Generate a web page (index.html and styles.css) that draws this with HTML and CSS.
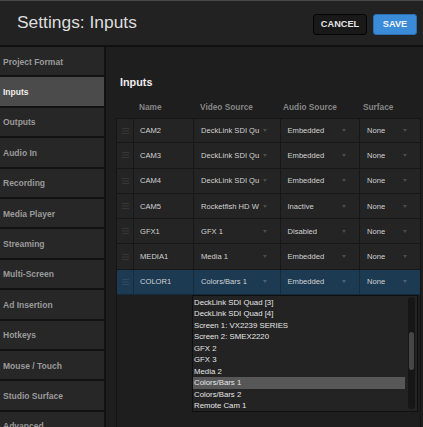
FILE: index.html
```html
<!DOCTYPE html>
<html>
<head>
  <title>Settings: Inputs</title>
  <link rel="stylesheet" href="styles.css">
</head>
<body>
  <div class="header">
    <h1 class="title">Settings: Inputs</h1>
    <div class="actions">
      <button class="btn btn-cancel">CANCEL</button>
      <button class="btn btn-save">SAVE</button>
    </div>
  </div>

  <div class="layout">
    <ul class="sidebar">
      <li class="nav-item">Project Format</li>
      <li class="nav-item active">Inputs</li>
      <li class="nav-item">Outputs</li>
      <li class="nav-item">Audio In</li>
      <li class="nav-item">Recording</li>
      <li class="nav-item">Media Player</li>
      <li class="nav-item">Streaming</li>
      <li class="nav-item">Multi-Screen</li>
      <li class="nav-item">Ad Insertion</li>
      <li class="nav-item">Hotkeys</li>
      <li class="nav-item">Mouse / Touch</li>
      <li class="nav-item">Studio Surface</li>
      <li class="nav-item">Advanced</li>
    </ul>

    <div class="main">
      <h2 class="section-title">Inputs</h2>

      <div class="col-heads">
        <div></div>
        <div class="ch-name">Name</div>
        <div class="ch-video">Video Source</div>
        <div class="ch-audio">Audio Source</div>
        <div class="ch-surface">Surface</div>
      </div>

      <div class="panel">
        <div class="row">
          <div class="cell handle"><svg width="7" height="6" viewBox="0 0 7 6"><path d="M0 .5h7M0 3h7M0 5.5h7" stroke="#363636" stroke-width="1"/></svg></div>
          <div class="cell name">CAM2</div>
          <div class="cell select video"><span>DeckLink SDI Qu</span><i class="caret"></i></div>
          <div class="cell select audio"><span>Embedded</span><i class="caret"></i></div>
          <div class="cell select surface"><span>None</span><i class="caret"></i></div>
        </div>
        <div class="row">
          <div class="cell handle"><svg width="7" height="6" viewBox="0 0 7 6"><path d="M0 .5h7M0 3h7M0 5.5h7" stroke="#363636" stroke-width="1"/></svg></div>
          <div class="cell name">CAM3</div>
          <div class="cell select video"><span>DeckLink SDI Qu</span><i class="caret"></i></div>
          <div class="cell select audio"><span>Embedded</span><i class="caret"></i></div>
          <div class="cell select surface"><span>None</span><i class="caret"></i></div>
        </div>
        <div class="row">
          <div class="cell handle"><svg width="7" height="6" viewBox="0 0 7 6"><path d="M0 .5h7M0 3h7M0 5.5h7" stroke="#363636" stroke-width="1"/></svg></div>
          <div class="cell name">CAM4</div>
          <div class="cell select video"><span>DeckLink SDI Qu</span><i class="caret"></i></div>
          <div class="cell select audio"><span>Embedded</span><i class="caret"></i></div>
          <div class="cell select surface"><span>None</span><i class="caret"></i></div>
        </div>
        <div class="row">
          <div class="cell handle"><svg width="7" height="6" viewBox="0 0 7 6"><path d="M0 .5h7M0 3h7M0 5.5h7" stroke="#363636" stroke-width="1"/></svg></div>
          <div class="cell name">CAM5</div>
          <div class="cell select video"><span>Rocketfish HD W</span><i class="caret"></i></div>
          <div class="cell select audio"><span>Inactive</span><i class="caret"></i></div>
          <div class="cell select surface"><span>None</span><i class="caret"></i></div>
        </div>
        <div class="row">
          <div class="cell handle"><svg width="7" height="6" viewBox="0 0 7 6"><path d="M0 .5h7M0 3h7M0 5.5h7" stroke="#363636" stroke-width="1"/></svg></div>
          <div class="cell name">GFX1</div>
          <div class="cell select video"><span>GFX 1</span><i class="caret"></i></div>
          <div class="cell select audio"><span>Disabled</span><i class="caret"></i></div>
          <div class="cell select surface"><span>None</span><i class="caret"></i></div>
        </div>
        <div class="row">
          <div class="cell handle"><svg width="7" height="6" viewBox="0 0 7 6"><path d="M0 .5h7M0 3h7M0 5.5h7" stroke="#363636" stroke-width="1"/></svg></div>
          <div class="cell name">MEDIA1</div>
          <div class="cell select video"><span>Media 1</span><i class="caret"></i></div>
          <div class="cell select audio"><span>Embedded</span><i class="caret"></i></div>
          <div class="cell select surface"><span>None</span><i class="caret"></i></div>
        </div>
        <div class="row selected">
          <div class="cell handle"><svg width="7" height="6" viewBox="0 0 7 6"><path d="M0 .5h7M0 3h7M0 5.5h7" stroke="#2f4a60" stroke-width="1"/></svg></div>
          <div class="cell name">COLOR1</div>
          <div class="cell select video"><span>Colors/Bars 1</span><i class="caret"></i></div>
          <div class="cell select audio"><span>Embedded</span><i class="caret"></i></div>
          <div class="cell select surface"><span>None</span><i class="caret"></i></div>
        </div>

        <!-- open video source menu for COLOR1 -->
        <div class="dropdown">
          <ul class="options">
            <li>DeckLink SDI Quad [3]</li>
            <li>DeckLink SDI Quad [4]</li>
            <li>Screen 1: VX2239 SERIES</li>
            <li>Screen 2: SMEX2220</li>
            <li>GFX 2</li>
            <li>GFX 3</li>
            <li>Media 2</li>
            <li class="current">Colors/Bars 1</li>
            <li>Colors/Bars 2</li>
            <li>Remote Cam 1</li>
          </ul>
          <div class="scroll-track"><div class="scroll-thumb"></div></div>
        </div>
      </div>
    </div>
  </div>
</body>
</html>
```

FILE: styles.css
```css
/* Dark settings dialog */

* {
  box-sizing: border-box;
}

body {
  margin: 0;
  width: 423px;
  height: 427px;
  overflow: hidden;
  background-color: #1e1e1e;
  font-family: "Liberation Sans", Arial, sans-serif;
  color: #ccc;
}

ul {
  list-style: none;
  margin: 0;
  padding: 0;
}

/* top bar */
.header {
  height: 47px;
  display: flex;
  align-items: center;
  justify-content: space-between;
  padding: 0 6px 0 17px;
  background-color: #222;
  border-top: 1px solid #4a4a4a;
  border-bottom: 2px solid #111;
}

.title {
  margin: 0 0 2px 0;
  font-size: 17.4px;
  font-weight: normal;
  color: #ddd;
}

.actions {
  display: flex;
  gap: 6px;
  margin-top: 2px;
}

.btn {
  height: 21px;
  border-radius: 3px;
  font-family: inherit;
  font-size: 9.2px;
  font-weight: bold;
  color: #e4e4e4;
  padding: 0;
  cursor: pointer;
}

.btn-cancel {
  width: 54px;
  background-color: #191919;
  border: 1px solid #050505;
}

.btn-save {
  width: 44px;
  background-color: #3a8bd8;
  border: 1px solid #2c6fb0;
  color: #f2f6fb;
}

.layout {
  display: flex;
  height: 380px;
}

/* left menu */
.sidebar {
  width: 106px;
  flex-shrink: 0;
  border-right: 2px solid #121212;
  background-color: #121212;
}

.nav-item {
  height: 30.4px;
  display: flex;
  align-items: center;
  padding: 1px 0 0 3px;
  background-color: #272727;
  border-bottom: 2px solid #121212;
  font-size: 8.5px;
  font-weight: bold;
  color: #9a9a9a;
}

.nav-item.active {
  background-color: #4b4b4b;
  color: #eee;
}

/* content */
.main {
  flex: 1;
  display: flex;
  flex-direction: column;
  padding: 29px 0 0 10px;
}

.section-title {
  margin: 0 0 7px 4px;
  font-size: 10.8px;
  line-height: 13px;
  font-weight: bold;
  color: #eee;
}

.col-heads,
.row {
  display: grid;
  grid-template-columns: 17px 60px 87px 79px 61px;
}

.col-heads {
  height: 22px;
  align-items: center;
  font-size: 8.3px;
  font-weight: bold;
  color: #858585;
}

.ch-name { padding-left: 6px; }
.ch-video { padding-left: 7px; }
.ch-audio { padding-left: 3px; }
.ch-surface { padding-left: 4px; }

.panel {
  position: relative;
  flex: 1;
  width: 305px;
  border-left: 1px solid #151515;
  border-right: 1px solid #151515;
}

.row {
  height: 25.3px;
  background-color: #242424;
  border-bottom: 1px solid #171717;
  font-size: 7.6px;
  color: #d2d2d2;
}

.row:first-child {
  border-top: 1px solid #171717;
}

.row.selected {
  background-color: #1c3a52;
  border-bottom-color: #132a3c;
}

.cell {
  display: flex;
  align-items: center;
  border-right: 1px solid #181818;
  white-space: nowrap;
  overflow: hidden;
}

.row.selected .cell {
  border-right-color: #142c40;
}

.cell:last-child {
  border-right: none;
}

.handle {
  justify-content: center;
  padding-left: 1px;
}

.name {
  padding-left: 6px;
}

.select {
  justify-content: space-between;
  padding-right: 13px;
}

.video { padding-left: 7px; }
.audio { padding-left: 6.5px; }
.surface { padding-left: 7px; padding-right: 14px; }

.caret {
  width: 0;
  height: 0;
  border-left: 2.5px solid transparent;
  border-right: 2.5px solid transparent;
  border-top: 3px solid #4c4c4c;
}

.row.selected .caret {
  border-top-color: #4a6478;
}

/* open menu */
.dropdown {
  position: absolute;
  left: 75px;
  top: 177px;
  width: 226px;
  height: 117px;
  display: flex;
  background-color: #232323;
  border: 1px solid #0f0f0f;
}

.options {
  flex: 1;
  padding-top: 1px;
}

.options li {
  height: 11.48px;
  line-height: 11.48px;
  padding-left: 1px;
  font-size: 7.8px;
  color: #e6e6e6;
  white-space: nowrap;
}

.options li.current {
  background-color: #575757;
}

.scroll-track {
  width: 7px;
  margin: 1px 2px 2px 3px;
  background-color: #161616;
  border-radius: 4px;
  padding: 35px 1px 0 1px;
}

.scroll-thumb {
  height: 38px;
  background-color: #464646;
  border-radius: 3px;
}
```
